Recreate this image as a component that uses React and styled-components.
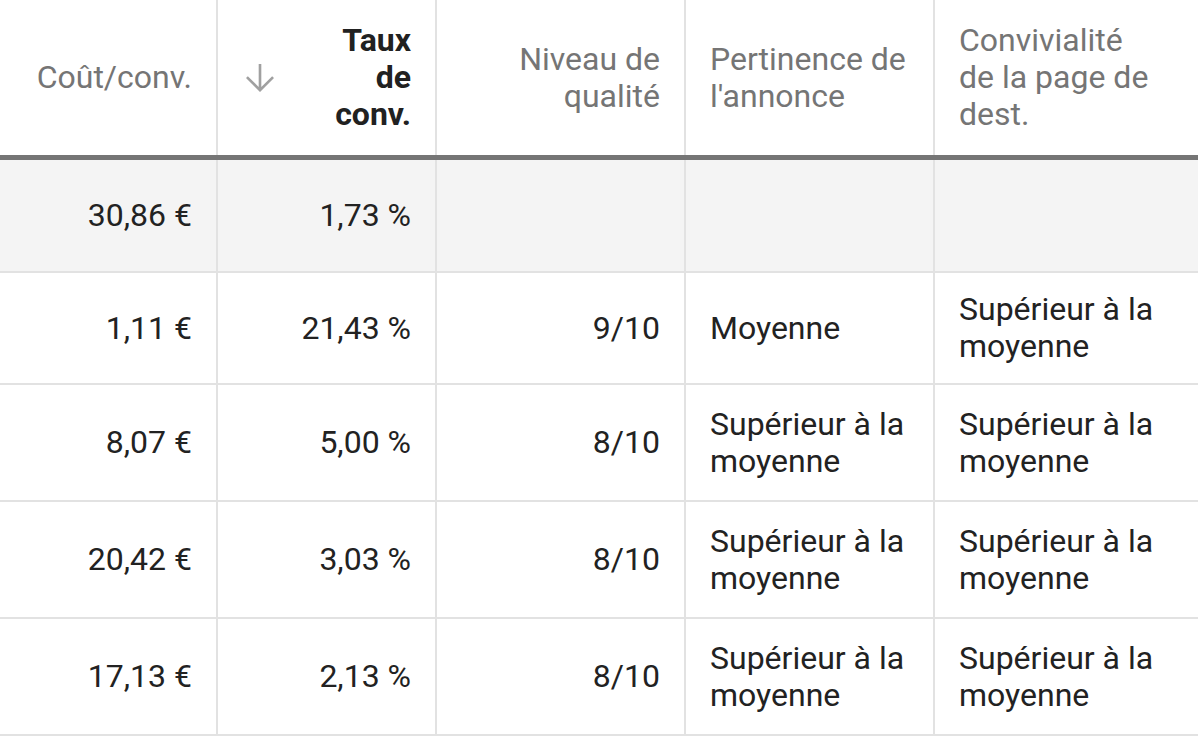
import React from 'react'
import styled, { createGlobalStyle } from 'styled-components'

const GlobalStyle = createGlobalStyle`
  html, body {
    margin: 0;
    padding: 0;
    background: #ffffff;
  }
  body {
    font-family: Roboto, "Liberation Sans", sans-serif;
    overflow: hidden;
  }
`

const COLUMNS = '216px 219px 249px 249px 1fr'

const Table = styled.div`
  width: 1198px;
  font-size: 32px;
  line-height: 37px;
  color: #222222;
`

const HeaderRow = styled.div`
  display: grid;
  grid-template-columns: ${COLUMNS};
  height: 155px;
  border-bottom: 5px solid #757575;
`

const Row = styled.div`
  display: grid;
  grid-template-columns: ${COLUMNS};
  height: ${(p) => p.$height}px;
  background: ${(p) => (p.$summary ? '#f4f4f4' : '#ffffff')};
  border-bottom: 2px solid #e2e2e2;
`

const Cell = styled.div`
  display: flex;
  align-items: center;
  justify-content: ${(p) => (p.$align === 'left' ? 'flex-start' : 'flex-end')};
  text-align: ${(p) => p.$align};
  padding: 0 24px;
  white-space: nowrap;
  & + & {
    border-left: 2px solid #e2e2e2;
  }
`

const HeadCell = styled(Cell)`
  color: ${(p) => (p.$active ? '#212121' : '#757575')};
  font-weight: ${(p) => (p.$active ? 700 : 400)};
  justify-content: ${(p) =>
    p.$sorted ? 'space-between' : p.$align === 'left' ? 'flex-start' : 'flex-end'};
`

const SortIcon = styled.svg`
  width: 42px;
  height: 42px;
  margin-left: -3px;
  fill: #a0a0a0;
  flex-shrink: 0;
`

const columns = [
  { label: ['Coût/conv.'], align: 'right' },
  { label: ['Taux', 'de', 'conv.'], align: 'right', active: true, sorted: true },
  { label: ['Niveau de', 'qualité'], align: 'right' },
  { label: ['Pertinence de', "l'annonce"], align: 'left' },
  { label: ['Convivialité', 'de la page de', 'dest.'], align: 'left' },
]

const sup = ['Supérieur à la', 'moyenne']

const summary = ['30,86 €', '1,73 %', '', '', '']

const rows = [
  ['1,11 €', '21,43 %', '9/10', ['Moyenne'], sup],
  ['8,07 €', '5,00 %', '8/10', sup, sup],
  ['20,42 €', '3,03 %', '8/10', sup, sup],
  ['17,13 €', '2,13 %', '8/10', sup, sup],
]

const Lines = ({ lines }) => (
  <div>
    {lines.map((l, i) => (
      <React.Fragment key={i}>
        {i > 0 && <br />}
        {l}
      </React.Fragment>
    ))}
  </div>
)

const ArrowDown = () => (
  <SortIcon viewBox="0 0 24 24">
    <path d="M20 12l-1.06-1.06L12.75 17.13V4h-1.5v13.13L5.06 10.94 4 12l8 8 8-8z" />
  </SortIcon>
)

const App = () => {
  return (
    <>
      <GlobalStyle />
      <Table>
        <HeaderRow>
          {columns.map((c, i) => (
            <HeadCell key={i} $align={c.align} $active={c.active} $sorted={c.sorted}>
              {c.sorted && <ArrowDown />}
              <Lines lines={c.label} />
            </HeadCell>
          ))}
        </HeaderRow>

        <Row $summary $height={111}>
          {summary.map((v, i) => (
            <Cell key={i} $align={columns[i].align}>
              {v}
            </Cell>
          ))}
        </Row>

        {rows.map((r, ri) => (
          <Row key={ri} $height={ri === 0 ? 110 : 115}>
            {r.map((v, i) => (
              <Cell key={i} $align={columns[i].align}>
                {Array.isArray(v) ? <Lines lines={v} /> : v}
              </Cell>
            ))}
          </Row>
        ))}
      </Table>
    </>
  )
}

export default App
